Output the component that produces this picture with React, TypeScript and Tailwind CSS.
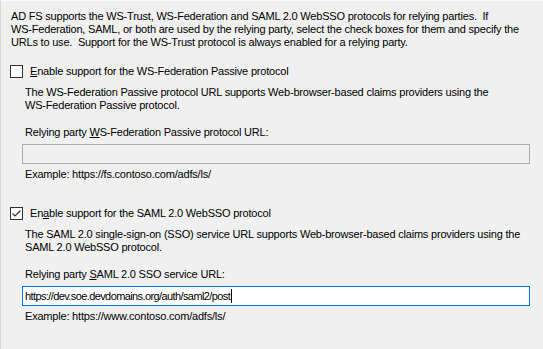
import React from 'react'

function CheckBox({ checked }: { checked: boolean }) {
  return (
    <div className="flex h-[13px] w-[13px] shrink-0 items-center justify-center border border-[#333333] bg-white">
      {checked && (
        <svg width="11" height="11" viewBox="0 0 11 11">
          <path d="M1.5 5.5 L4 8 L9.5 2.5" fill="none" stroke="#333333" strokeWidth="1.2" />
        </svg>
      )}
    </div>
  )
}

type SectionProps = {
  checked: boolean
  label: React.ReactNode
  desc: string[]
  urlLabel: React.ReactNode
  value: string
  example: string
}

function Section({ checked, label, desc, urlLabel, value, example }: SectionProps) {
  return (
    <div>
      <div className="flex h-[13px] items-center gap-[7px]">
        <CheckBox checked={checked} />
        <span>{label}</span>
      </div>

      <div className="mt-[8px] pl-[15px]">
        {desc.map((line) => (
          <div key={line}>{line}</div>
        ))}
      </div>

      <div className="mt-[14px] pl-[15px]">{urlLabel}</div>

      {checked ? (
        <div className="ml-[12px] mt-[5px] flex h-[20px] w-[508px] items-center border border-[#0078d7] bg-white pl-[2px] text-black">
          <span className="tracking-[-0.6px]">{value}</span>
          <span className="ml-[1px] h-[14px] w-px bg-black" />
        </div>
      ) : (
        <div className="ml-[12px] mt-[5px] h-[20px] w-[508px] border border-[#adadad] bg-[#f0f0f0]" />
      )}

      <div className="mt-[4px] pl-[15px]">{example}</div>
    </div>
  )
}

export default function App() {
  return (
    <main
      className="h-[349px] w-[543px] overflow-hidden border-l border-t border-l-[#d9d9d9] border-t-[#fbfbfb] bg-[#f0f0f0] pl-[9px] pt-[9px] text-[11px] leading-[13px] tracking-[-0.2px] text-black"
      style={{ fontFamily: '"Liberation Sans", Arial, sans-serif' }}
    >
      <div className="whitespace-pre pl-[1px]">
        <div>AD FS supports the WS-Trust, WS-Federation and SAML 2.0 WebSSO protocols for relying parties.  If</div>
        <div>WS-Federation, SAML, or both are used by the relying party, select the check boxes for them and specify the</div>
        <div>URLs to use.  Support for the WS-Trust protocol is always enabled for a relying party.</div>
      </div>

      <div className="mt-[16px]">
        <Section
          checked={false}
          label={
            <>
              <u>E</u>nable support for the WS-Federation Passive protocol
            </>
          }
          desc={[
            'The WS-Federation Passive protocol URL supports Web-browser-based claims providers using the',
            'WS-Federation Passive protocol.',
          ]}
          urlLabel={
            <>
              Relying party <u>W</u>S-Federation Passive protocol URL:
            </>
          }
          value=""
          example="Example: https://fs.contoso.com/adfs/ls/"
        />
      </div>

      <div className="mt-[26px]">
        <Section
          checked={true}
          label={
            <>
              En<u>a</u>ble support for the SAML 2.0 WebSSO protocol
            </>
          }
          desc={[
            'The SAML 2.0 single-sign-on (SSO) service URL supports Web-browser-based claims providers using the',
            'SAML 2.0 WebSSO protocol.',
          ]}
          urlLabel={
            <>
              Relying party <u>S</u>AML 2.0 SSO service URL:
            </>
          }
          value="https://dev.soe.devdomains.org/auth/saml2/post"
          example="Example: https://www.contoso.com/adfs/ls/"
        />
      </div>
    </main>
  )
}
